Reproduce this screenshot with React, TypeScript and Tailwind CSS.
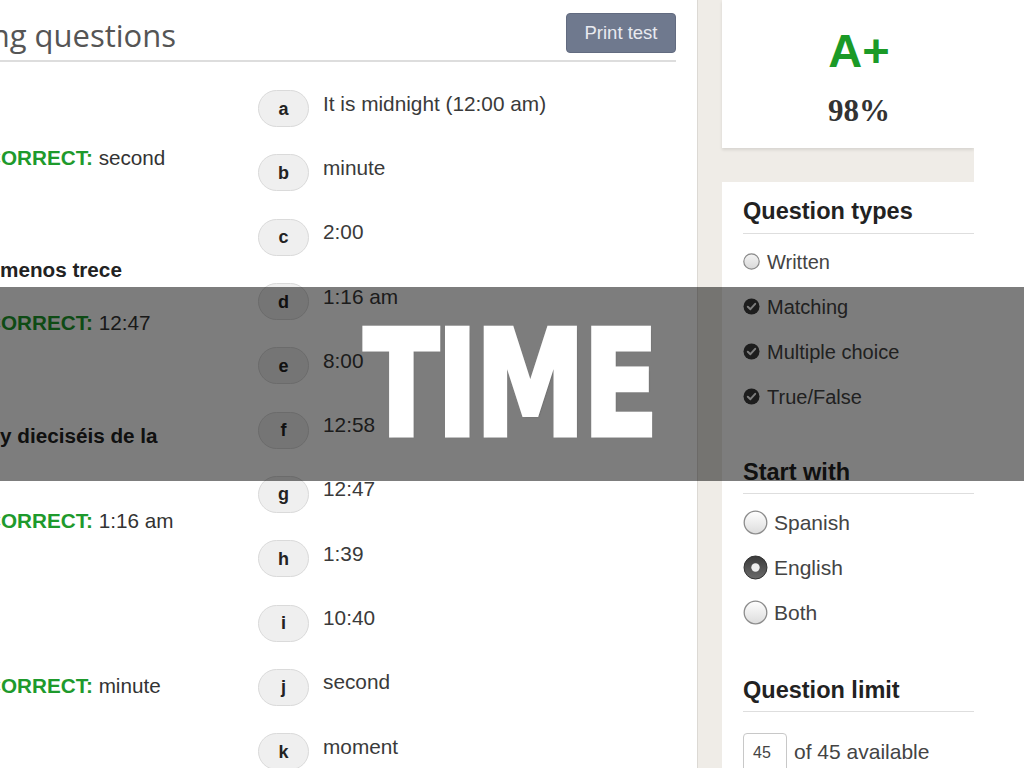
import React from "react";

const letters: [string, string][] = [
  ["a", "It is midnight (12:00 am)"],
  ["b", "minute"],
  ["c", "2:00"],
  ["d", "1:16 am"],
  ["e", "8:00"],
  ["f", "12:58"],
  ["g", "12:47"],
  ["h", "1:39"],
  ["i", "10:40"],
  ["j", "second"],
  ["k", "moment"],
];

function CheckDot() {
  return (
    <svg width="17" height="17" viewBox="0 0 17 17" className="shrink-0">
      <circle cx="8.5" cy="8.5" r="8" fill="#3b3b3b" />
      <path d="M4.8 8.8 L7.4 11.2 L12.2 5.8" fill="none" stroke="#fff" strokeWidth="2" strokeLinecap="round" strokeLinejoin="round" />
    </svg>
  );
}

function EmptyDot() {
  return (
    <svg width="17" height="17" viewBox="0 0 17 17" className="shrink-0">
      <defs>
        <linearGradient id="g1" x1="0" y1="0" x2="0" y2="1">
          <stop offset="0" stopColor="#f4f4f4" />
          <stop offset="1" stopColor="#d8d8d8" />
        </linearGradient>
      </defs>
      <circle cx="8.5" cy="8.5" r="7.7" fill="url(#g1)" stroke="#8a8a8a" strokeWidth="1.2" />
    </svg>
  );
}

function BigRadio({ on }: { on?: boolean }) {
  return (
    <svg width="25" height="25" viewBox="0 0 25 25" className="shrink-0">
      <defs>
        <linearGradient id="g2" x1="0" y1="0" x2="0" y2="1">
          <stop offset="0" stopColor="#ffffff" />
          <stop offset="1" stopColor="#dcdcdc" />
        </linearGradient>
        <linearGradient id="g3" x1="0" y1="0" x2="0" y2="1">
          <stop offset="0" stopColor="#3a3a3a" />
          <stop offset="1" stopColor="#6a6a6a" />
        </linearGradient>
      </defs>
      {on ? (
        <>
          <circle cx="12.5" cy="12.5" r="11.5" fill="url(#g3)" stroke="#333" strokeWidth="1" />
          <circle cx="12.5" cy="12.5" r="4.2" fill="#eeeeee" />
        </>
      ) : (
        <circle cx="12.5" cy="12.5" r="11.3" fill="url(#g2)" stroke="#8c8c8c" strokeWidth="1.3" />
      )}
    </svg>
  );
}

export default function App() {
  return (
    <div
      className="relative w-[1024px] h-[768px] overflow-hidden bg-white flex"
      style={{ fontFamily: '"Liberation Sans", Arial, sans-serif' }}
    >
      {/* Main panel */}
      <div className="w-[698px] shrink-0 bg-white pr-[21px] border-r border-[#dcd9d4] shadow-[1px_0_3px_rgba(0,0,0,0.08)]">
        <div className="h-[62px] flex items-center justify-between border-b-2 border-[#dddddd] pt-[4px]">
          <div className="w-[176px] flex justify-end whitespace-nowrap">
            <span
              className="text-[31px] text-[#555555] leading-none mt-[6px]"
              style={{ fontFamily: '"Open Sans", sans-serif' }}
            >
              Matching questions
            </span>
          </div>
          <div className="w-[110px] h-[40px] rounded-[4px] bg-[#6f798e] border border-[#626b80] flex items-center justify-center text-[18.5px] text-[#e8eaf0] mt-[2px]">
            Print test
          </div>
        </div>

        <div className="flex">
          {/* questions column */}
          <div className="w-[258px] shrink-0 flex flex-col text-[20.7px] leading-[24px] text-[#333333] whitespace-nowrap">
            <div className="mt-[84px] ml-[-14px]">
              <span className="font-bold text-[#1e9a2c]">CORRECT:</span> second
            </div>
            <div className="mt-[88px] font-bold text-[#222222]">menos trece</div>
            <div className="mt-[28.5px] ml-[-14px]">
              <span className="font-bold text-[#1e9a2c]">CORRECT:</span> 12:47
            </div>
            <div className="mt-[89.5px] font-bold text-[#222222]">y dieciséis de la</div>
            <div className="mt-[61px] ml-[-14px]">
              <span className="font-bold text-[#1e9a2c]">CORRECT:</span> 1:16 am
            </div>
            <div className="mt-[141px] ml-[-14px]">
              <span className="font-bold text-[#1e9a2c]">CORRECT:</span> minute
            </div>
          </div>

          {/* letters column */}
          <div className="flex-1 flex flex-col pt-[14.5px]">
            {letters.map(([l, t]) => (
              <div key={l} className="h-[64.3px] shrink-0 flex items-center">
                <div className="w-[51px] h-[37px] rounded-full bg-[#efefef] border border-[#dadada] flex items-center justify-center text-[18px] font-bold text-[#222222] leading-none">
                  {l}
                </div>
                <div className="ml-[14px] mb-[10px] text-[20.8px] leading-[24px] text-[#3a3a3a] whitespace-nowrap">
                  {t}
                </div>
              </div>
            ))}
          </div>
        </div>
      </div>

      {/* Sidebar */}
      <div className="w-[276px] shrink-0 bg-[#efece7] pl-[24px] flex flex-col">
        <div className="h-[148px] shrink-0 bg-white shadow-[0_2px_3px_rgba(0,0,0,0.10)] flex flex-col items-center pt-[27px] pl-[22px]">
          <div className="text-[47px] font-bold leading-none text-[#1b9a27]">A+</div>
          <div
            className="mt-[21px] text-[31px] font-bold leading-none text-[#333333]"
            style={{ fontFamily: '"Liberation Serif", "Times New Roman", serif' }}
          >
            98%
          </div>
        </div>

        <div className="mt-[34px] flex-1 bg-white pl-[21px] pt-[18px] text-[#444444]">
          <div className="text-[23.5px] font-bold leading-none text-[#222222] pb-[9px] border-b border-[#dedede]">
            Question types
          </div>
          <div className="mt-[5.5px] flex flex-col text-[20px] leading-none">
            <div className="h-[45px] flex items-center gap-[7px]">
              <EmptyDot />
              <span>Written</span>
            </div>
            <div className="h-[45px] flex items-center gap-[7px]">
              <CheckDot />
              <span>Matching</span>
            </div>
            <div className="h-[45px] flex items-center gap-[7px]">
              <CheckDot />
              <span>Multiple choice</span>
            </div>
            <div className="h-[45px] flex items-center gap-[7px]">
              <CheckDot />
              <span>True/False</span>
            </div>
          </div>

          <div className="mt-[41.5px] text-[23.5px] font-bold leading-none text-[#222222] pb-[9px] border-b border-[#dedede]">
            Start with
          </div>
          <div className="mt-[6px] flex flex-col text-[21px] leading-none">
            <div className="h-[45px] flex items-center gap-[6px]">
              <BigRadio />
              <span>Spanish</span>
            </div>
            <div className="h-[45px] flex items-center gap-[6px]">
              <BigRadio on />
              <span>English</span>
            </div>
            <div className="h-[45px] flex items-center gap-[6px]">
              <BigRadio />
              <span>Both</span>
            </div>
          </div>

          <div className="mt-[43.5px] text-[23.5px] font-bold leading-none text-[#222222] pb-[9px] border-b border-[#dedede]">
            Question limit
          </div>
          <div className="mt-[21px] flex items-start">
            <div className="w-[44px] h-[40px] rounded-[4px] border border-[#c8c8c8] bg-white pl-[9px] pt-[11px] text-[16px] leading-none text-[#444444]">
              45
            </div>
            <div className="ml-[7px] mt-[8px] text-[21px] leading-none">of 45 available</div>
          </div>
        </div>
      </div>

      <div className="flex-1 bg-white" />

      {/* Title overlay */}
      <div className="absolute left-0 right-0 top-[287px] h-[194px] bg-[rgba(0,0,0,0.51)] flex items-center justify-center pr-[4px]">
        <div
          className="text-[147px] font-bold leading-none text-white scale-x-[0.75] tracking-[-3px] [-webkit-text-stroke:5px_white] [text-shadow:2px_2px_2px_rgba(0,0,0,0.35)]"
          style={{ fontFamily: '"DejaVu Sans", sans-serif' }}
        >
          TIME
        </div>
      </div>
    </div>
  );
}
